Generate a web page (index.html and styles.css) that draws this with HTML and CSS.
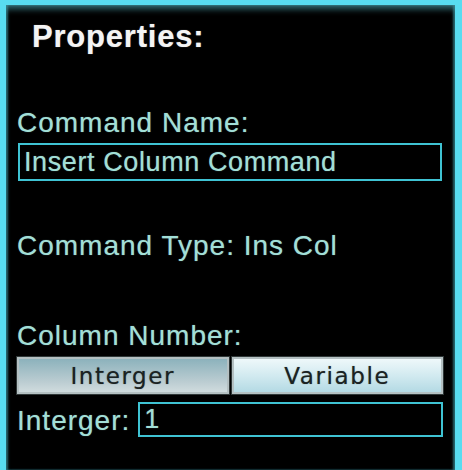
FILE: index.html
```html
<!DOCTYPE html>
<html>
<head>
<meta charset="utf-8">
<link rel="stylesheet" href="styles.css">
</head>
<body>
<div class="panel">
  <div class="title">Properties:</div>
  <div class="label label-name">Command Name:</div>
  <div class="field field-name">Insert Column Command</div>
  <div class="label label-type">Command Type: Ins Col</div>
  <div class="label label-col">Column Number:</div>
  <div class="toggle">
    <div class="btn btn-on">Interger</div>
    <div class="btn btn-off">Variable</div>
  </div>
  <div class="int-row">
    <div class="label">Interger:</div>
    <div class="field field-int">1</div>
  </div>
</div>
</body>
</html>
```
FILE: styles.css
```css
html, body {
  margin: 0;
  padding: 0;
  background: #ffffff;
}
.panel {
  box-sizing: border-box;
  width: 462px;
  height: 470px;
  background: #000;
  border-left: 6px solid #58dcf0;
  border-top: 5px solid #58dcf0;
  border-right: 7px solid #58dcf0;
  box-shadow: inset 0 6px 6px -2px rgba(70, 150, 160, 0.7), inset 2px 0 2px rgba(50, 130, 140, 0.7), inset -2px 0 2px rgba(50, 130, 140, 0.7);
  padding: 14px 12px 0 11px;
  display: flex;
  flex-direction: column;
  font-family: "Liberation Sans", Arial, sans-serif;
}
.title {
  font-weight: bold;
  font-size: 31px;
  line-height: 36px;
  letter-spacing: 0.8px;
  color: #f4f4f4;
  padding-left: 15px;
  text-shadow: 0 0 1px rgba(255, 255, 255, 0.5);
}
.label {
  font-size: 28px;
  line-height: 32px;
  letter-spacing: 1px;
  color: #a2dfd7;
  white-space: nowrap;
  text-shadow: 0 0 1px rgba(160, 220, 214, 0.6);
}
.label-name { margin-top: 52px; }
.field {
  box-sizing: border-box;
  border: 2px solid #3fc3d3;
  color: #a2dfd7;
  font-size: 27px;
  letter-spacing: 0.6px;
  padding: 0 4px;
  white-space: nowrap;
  text-shadow: 0 0 1px rgba(160, 220, 214, 0.6);
}
.field-name {
  margin-top: 4px;
  margin-left: 1px;
  margin-right: 1px;
  height: 38px;
  line-height: 33px;
  padding-top: 1px;
}
.label-type { margin-top: 49px; }
.label-col { margin-top: 58px; }
.toggle {
  margin-top: 5px;
  display: flex;
  gap: 3px;
  height: 37px;
}
.btn {
  flex: 1;
  box-sizing: border-box;
  border: 2px solid #b4c0c2;
  outline: 1px solid #303838;
  font-family: "DejaVu Sans", Verdana, sans-serif;
  font-size: 23px;
  letter-spacing: 1.6px;
  color: #1a2222;
  display: flex;
  align-items: center;
  justify-content: center;
  text-shadow: 0 0 1px rgba(20, 30, 30, 0.5);
}
.btn-on {
  background: linear-gradient(#8cb2bc, #bccdd2 70%, #d0dcde);
}
.btn-off {
  background: linear-gradient(#eef8fa, #d2eaf0 50%, #b4dae4);
}
.int-row {
  margin-top: 8px;
  display: flex;
  align-items: flex-end;
  gap: 8px;
}
.field-int {
  flex: 1;
  height: 35px;
  line-height: 31px;
  padding: 0 4px;
}
```
